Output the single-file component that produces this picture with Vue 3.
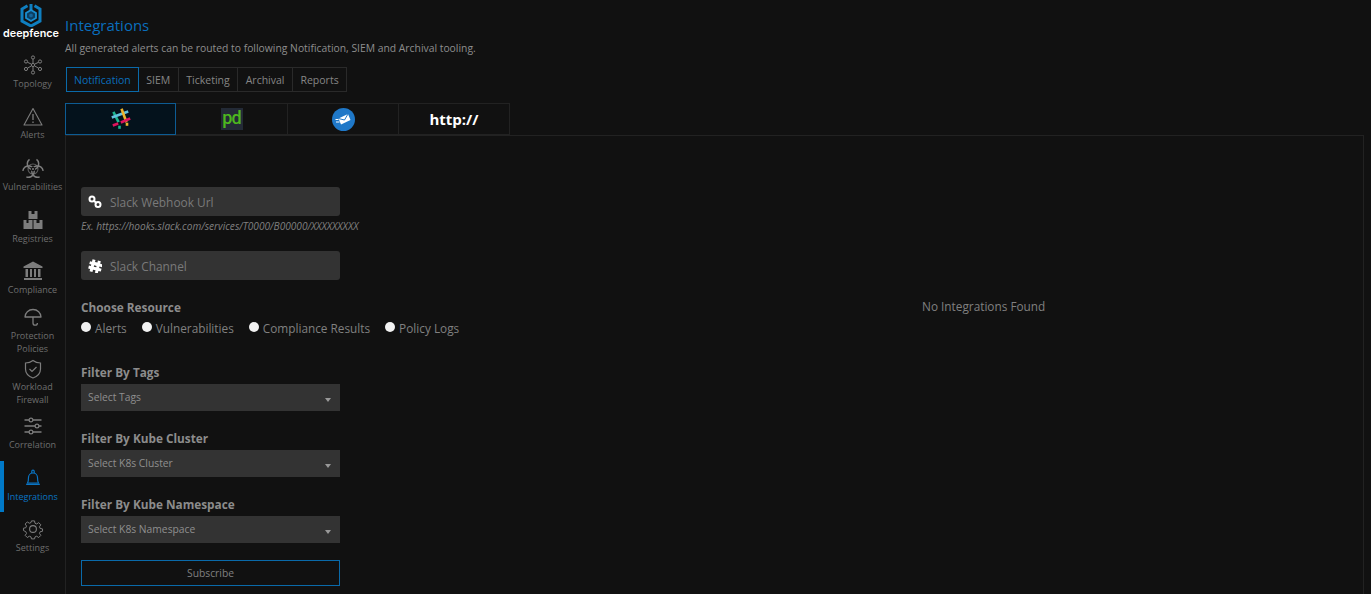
<script setup>
const tabs = ['Notification', 'SIEM', 'Ticketing', 'Archival', 'Reports']
const radios = ['Alerts', 'Vulnerabilities', 'Compliance Results', 'Policy Logs']
const filters = [
  { label: 'Filter By Tags', ph: 'Select Tags' },
  { label: 'Filter By Kube Cluster', ph: 'Select K8s Cluster' },
  { label: 'Filter By Kube Namespace', ph: 'Select K8s Namespace' },
]
const nav = [
  { id: 'topology', lines: ['Topology'] },
  { id: 'alerts', lines: ['Alerts'] },
  { id: 'vuln', lines: ['Vulnerabilities'] },
  { id: 'registries', lines: ['Registries'] },
  { id: 'compliance', lines: ['Compliance'] },
  { id: 'protection', lines: ['Protection', 'Policies'], tight: true },
  { id: 'firewall', lines: ['Workload', 'Firewall'], tight: true },
  { id: 'correlation', lines: ['Correlation'] },
  { id: 'integrations', lines: ['Integrations'], active: true },
  { id: 'settings', lines: ['Settings'] },
]
const horn = 'M7.500 2.300A5.700 5.700 0 1 0 14.500 2.300'
</script>

<template>
  <div class="page">
    <aside class="side">
      <div class="logo">
        <svg width="22" height="24" viewBox="0 0 22 24" class="logo-mark">
          <path d="M7.500 2.800 2 6v12l9 5 9-5V6l-5.500-3.200" fill="none" stroke="#0f7fc0" stroke-width="3" />
          <path d="M11 1v6" stroke="#0f7fc0" stroke-width="3" />
          <path d="M11 7l5 2.900v5.200L11 18l-5-2.900V9.900z" fill="#0b3f63" stroke="#1a8ed0" stroke-width="1.800" />
          <path d="M11 10.500l1.800 1v2l-1.800 1-1.800-1v-2z" fill="#14659c" />
        </svg>
        <div class="logo-text">deepfence</div>
      </div>
      <nav class="nav">
        <div v-for="n in nav" :key="n.id" class="nav-item" :class="{ active: n.active, tight: n.tight }">
          <svg class="nav-icon" width="22" height="22" viewBox="0 0 22 22" fill="none" stroke="currentColor">
            <g v-if="n.id === 'topology'" stroke-width="1">
              <circle cx="11" cy="3.500" r="1.600" /><circle cx="11" cy="11" r="1.600" /><circle cx="11" cy="18.500" r="1.600" />
              <circle cx="4" cy="7.500" r="1.600" /><circle cx="18" cy="7.500" r="1.600" /><circle cx="4" cy="15" r="1.600" /><circle cx="18" cy="15" r="1.600" />
              <path d="M11 5.100V9.400M11 12.600v4.300M5.500 8.300l4 1.900M16.500 8.300l-4 1.900M5.500 14.200l4-2.400M16.500 14.200l-4-2.400" />
            </g>
            <g v-else-if="n.id === 'alerts'" stroke-width="1.100">
              <path d="M11 2.500 20 19H2z" stroke-linejoin="round" />
              <path d="M11 8v6M11 15.500v1.500" stroke-width="1.300" />
            </g>
            <g v-else-if="n.id === 'vuln'">
              <g stroke-width="1.500">
                <path :d="horn" />
                <path :d="horn" transform="rotate(120 11 12)" />
                <path :d="horn" transform="rotate(240 11 12)" />
              </g>
              <circle cx="11" cy="12" r="5" stroke-width="1.100" opacity=".7" />
              <circle cx="11" cy="12" r="2.200" fill="#111" stroke="none" />
              <circle cx="11" cy="12" r="1" fill="currentColor" stroke="none" />
            </g>
            <g v-else-if="n.id === 'registries'" fill="currentColor" stroke="none">
              <path d="M6.500 2H9.500V5h3V2h3V10h-9zM1.500 11H4.500V14H6.500V11H10.500V20h-9zM11.500 11H14.500V14H17.500V11H20.500V20h-9z" />
            </g>
            <g v-else-if="n.id === 'compliance'" fill="currentColor" stroke="none">
              <path d="M11 1.500 20.500 6.500V8h-19V6.500zM3.500 9H6v8H3.500zM8 9h2v8H8zM12 9h2v8h-2zM16 9h2.500v8H16zM2 18h18v2H2z" />
            </g>
            <g v-else-if="n.id === 'protection'" stroke-width="1.300">
              <path d="M3 11a8 7.500 0 0 1 16 0z" stroke-linejoin="round" />
              <path d="M11 11v6a2.200 2.200 0 0 0 4.400 0" />
            </g>
            <g v-else-if="n.id === 'firewall'" stroke-width="1.200">
              <path d="M11 2.500c2.500 2 5 2.500 7.500 2.500v6c0 4.500-3.500 7.500-7.500 9-4-1.500-7.500-4.500-7.500-9V5C6 5 8.500 4.500 11 2.500z" />
              <path d="M7.500 11l2.500 2.500 4.500-4.500" />
            </g>
            <g v-else-if="n.id === 'correlation'" stroke-width="1.500">
              <path d="M2.500 5h17M2.500 11h17M2.500 17h17" />
              <circle cx="9" cy="5" r="1.900" fill="#111" stroke-width="1.200" /><circle cx="15" cy="11" r="1.900" fill="#111" stroke-width="1.200" /><circle cx="9" cy="17" r="1.900" fill="#111" stroke-width="1.200" />
            </g>
            <g v-else-if="n.id === 'integrations'" stroke-width="1.200">
              <path d="M5.500 16c1-1.500 1-3 1-5.500a4.500 4.500 0 0 1 9 0c0 2.500 0 4 1 5.500z" stroke-linejoin="round" />
              <path d="M4.700 17.300h12.600" stroke-linecap="round" stroke-width="1.400" />
              <path d="M9.800 6V4.300a1.200 1.200 0 0 1 2.400 0V6" />
            </g>
            <g v-else stroke-width="1.100">
              <circle cx="11" cy="11" r="3.400" />
              <path d="M9.300 2h3.400l.5 2.600 1.900.8 2.200-1.500 2.400 2.400-1.500 2.200.8 1.900 2.600.5v2.600l-2.600.5-.8 1.900 1.500 2.200-2.400 2.400-2.200-1.500-1.900.8-.5 2.200H9.300l-.5-2.200-1.900-.8-2.200 1.500-2.400-2.400 1.500-2.200-.8-1.900L.4 12.700v-2.600L3 9.600l.8-1.900L2.300 5.500l2.400-2.400 2.200 1.500 1.900-.8z" transform="translate(1.100 1.100) scale(.9)" stroke-linejoin="round" />
            </g>
          </svg>
          <div class="nav-label">
            <div v-for="l in n.lines" :key="l">{{ l }}</div>
          </div>
        </div>
      </nav>
    </aside>

    <main class="main">
      <h1 class="title">Integrations</h1>
      <p class="sub">All generated alerts can be routed to following Notification, SIEM and Archival tooling.</p>
      <div class="tabs">
        <div v-for="(t, i) in tabs" :key="t" class="tab" :class="{ on: i === 0 }">{{ t }}</div>
      </div>
      <div class="brands">
        <div class="brand on">
          <svg width="22" height="22" viewBox="0 0 22 22" stroke-width="2.600" stroke-linecap="square">
            <path d="M4 5l4 8" stroke="#1cb58f" /><path d="M3 9l14-5" stroke="#62c2dd" />
            <path d="M12 2l4 11" stroke="#edb32c" /><path d="M12 14l7-3" stroke="#e0145c" />
            <path d="M4 17l3-1" stroke="#e0145c" /><path d="M17 16v.5" stroke="#edb32c" />
            <path d="M9.500 19v.5" stroke="#1cb58f" />
          </svg>
        </div>
        <div class="brand wide">
          <div class="pd">pd</div>
        </div>
        <div class="brand">
          <svg width="23" height="23" viewBox="0 0 23 23">
            <circle cx="11.500" cy="11.500" r="11.500" fill="#1f78c8" />
            <path d="M6.500 10.500 16 6l2.500 6-9.500 4.500z" fill="#fff" />
            <path d="M6.500 10.500l6 1.500 3.500-6" stroke="#1f78c8" stroke-width="1" fill="none" />
            <path d="M3.500 11.500h3M4 14h3.500" stroke="#fff" stroke-width="1" />
          </svg>
        </div>
        <div class="brand http">http://</div>
      </div>
      <section class="panel">
        <form class="form">
          <div class="field">
            <svg class="ficon" width="14" height="14" viewBox="0 0 14 14" fill="none" stroke="#fff" stroke-width="2">
              <circle cx="4" cy="4" r="2.500" /><circle cx="10" cy="9.500" r="2.500" /><path d="M5.500 5.500l3 2.500" />
            </svg>
            <span>Slack Webhook Url</span>
          </div>
          <div class="hint">Ex. https://hooks.slack.com/services/T0000/B00000/XXXXXXXXX</div>
          <div class="field second">
            <svg class="ficon" width="14" height="14" viewBox="0 0 14 14" fill="#fff">
              <path transform="rotate(14 7 7)" d="M3 1h3v2h2.500V1h3v2.500H14v3h-2.500V8H14v3h-2.500v2.500h-3V11H6v2.500H3V11H1V8h2V6.500H1v-3h2zM6 6.500V8h2.500V6.500z" />
            </svg>
            <span>Slack Channel</span>
          </div>
          <div class="label res">Choose Resource</div>
          <div class="radios">
            <label v-for="r in radios" :key="r" class="radio"><i class="dot"></i>{{ r }}</label>
          </div>
          <div class="filters">
            <div v-for="f in filters" :key="f.label" class="filter">
              <div class="label">{{ f.label }}</div>
              <div class="select"><span>{{ f.ph }}</span><i class="caret"></i></div>
            </div>
          </div>
          <div class="submit">Subscribe</div>
        </form>
        <div class="empty">No Integrations Found</div>
      </section>
    </main>
  </div>
</template>

<style>
html, body { margin: 0; background: #111; overflow: hidden; }
</style>

<style scoped>
.page { display: flex; width: 1371px; height: 594px; overflow: hidden; background: #111; font-family: "Open Sans", sans-serif; color: #999; }
.side { width: 65px; flex: none; }
.logo { height: 48px; display: flex; flex-direction: column; align-items: center; padding: 3px 3px 0 0; box-sizing: border-box; }
.logo-mark { display: block; }
.logo-text { font-family: Inter, sans-serif; font-size: 10.800px; font-weight: 600; color: #fff; line-height: 13px; }
.nav-item { height: 51.6px; display: flex; flex-direction: column; align-items: center; color: #7d7d7d; box-sizing: border-box; padding-top: 6px; position: relative; }
.nav-icon { display: block; flex: none; }
.nav-label { font-size: 9px; line-height: 13px; margin-top: .8px; text-align: center; color: #6e6e6e; white-space: nowrap; }
.nav-item.tight { padding-top: 0; }
.nav-item.active { color: #0a75c4; }
.nav-item.active .nav-label { color: #0a75c4; }
.nav-item.active::before { content: ""; position: absolute; left: 0; top: 0; bottom: 0; width: 4px; background: #0079c8; }
.main { flex: 1; min-width: 0; display: flex; flex-direction: column; }
.title { margin: 15px 0 0; font-size: 15px; line-height: 20px; font-weight: 400; color: #0a6ebd; }
.sub { margin: 6px 0 0; font-size: 10.350px; line-height: 14px; color: #8e8e8e; }
.tabs { display: flex; margin: 12px 0 0 1px; align-self: flex-start; }
.tab { height: 25px; line-height: 24px; box-sizing: border-box; padding: 0 7.500px; font-size: 10.500px; border: 1px solid #2a2a2a; border-left: 0; color: #868686; }
.tab.on { border: 1px solid #0a6aaa; color: #0a6ebd; padding: 0 7px; }
.brands { display: flex; margin-top: 11px; }
.brand { width: 111px; height: 32px; box-sizing: border-box; display: flex; align-items: center; justify-content: center; border: 1px solid #222; border-left: 0; }
.brand.wide { width: 112px; }
.brand.on { background: #04121c; border: 1px solid #0d5c94; }
.pd { width: 22px; height: 22px; background: #232a36; color: #4db71e; font: 500 18px/19px Roboto, sans-serif; text-align: center; letter-spacing: -1px; }
.http { font: 700 15px "Open Sans", sans-serif; color: #fff; }
.panel { width: 1299px; flex: 1; box-sizing: border-box; border-left: 1px solid #222; border-right: 1px solid #222; border-top: 1px solid #222; display: flex; position: relative; }
.form { width: 259px; margin-left: 15px; padding-top: 51px; flex: none; }
.field { height: 29px; background: #333; border-radius: 3px; display: flex; align-items: center; padding-left: 7px; gap: 8px; font-size: 11.900px; color: #7a7a7a; }
.ficon { display: block; }
.second { margin-top: 18px; }
.hint { font-size: 10.100px; line-height: 14px; margin-top: 3px; font-style: italic; color: #808080; white-space: nowrap; }
.label { font-size: 11.800px; line-height: 16px; font-weight: 700; color: #8c8c8c; }
.res { margin-top: 19px; }
.radios { display: flex; margin-top: 5px; white-space: nowrap; }
.radio { display: flex; align-items: center; font-size: 11.800px; line-height: 16px; margin-right: 15px; color: #808080; }
.dot { width: 10px; height: 10px; border-radius: 50%; background: #f2f2f2; margin-right: 4px; margin-top: -3px; }
.filters { margin-top: 28px; display: flex; flex-direction: column; gap: 19px; }
.select { height: 27px; margin-top: 4px; background: #333; padding: 0 7px; display: flex; align-items: center; justify-content: space-between; font-size: 10.300px; color: #8f8f8f; }
.select span { margin-top: -2px; }
.caret { width: 0; height: 0; border-left: 3.500px solid transparent; border-right: 3.500px solid transparent; border-top: 4px solid #999; margin-top: 5px; margin-right: 2px; }
.submit { margin-top: 17px; height: 26px; line-height: 25px; box-sizing: border-box; border: 1px solid #0a6aaa; text-align: center; font-size: 10.300px; color: #808080; }
.empty { margin-left: 582px; margin-top: 162px; font-size: 11.800px; line-height: 16px; color: #808080; white-space: nowrap; }
</style>
